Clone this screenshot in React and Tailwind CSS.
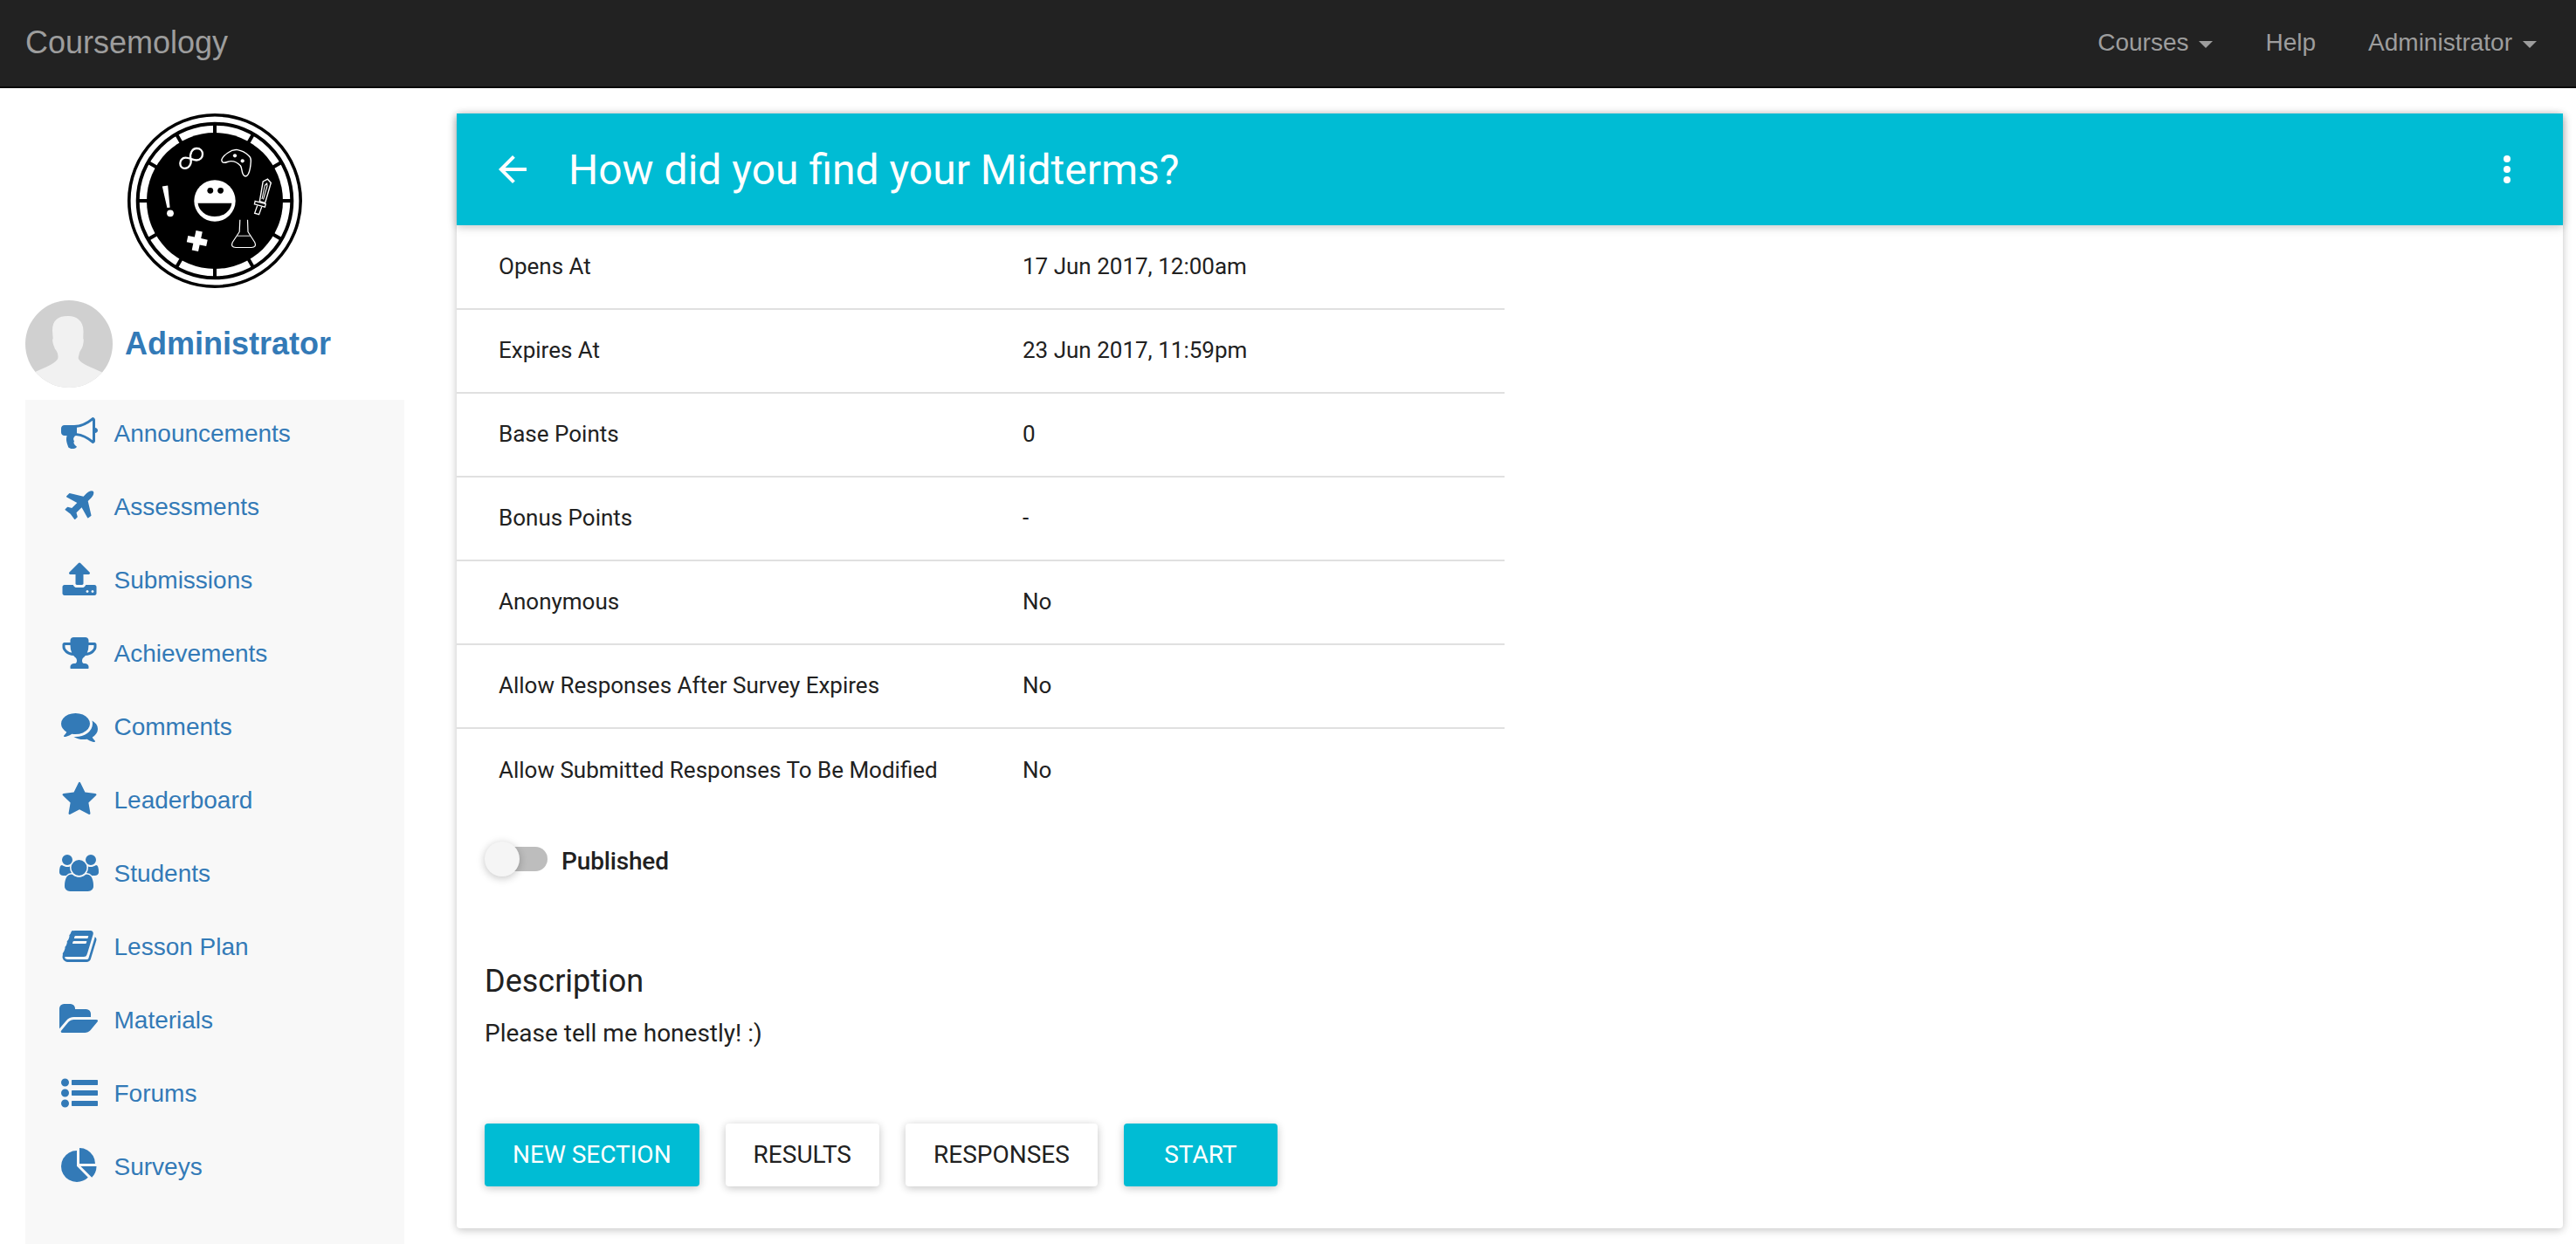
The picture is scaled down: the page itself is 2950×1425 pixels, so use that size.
const NAV = [
  { label: 'Announcements', d: 'M1664 640q53 0 90.5 37.5t37.5 90.5-37.5 90.5-90.5 37.5v384q0 52-38 90t-90 38q-417-347-812-380-58 19-91 66t-31 100.5 40 92.5q-20 33-23 65.5t6 58 33.5 55 48 50 61.5 50.5q-29 58-111.5 83t-168.5 11.5-132-55.5q-7-23-29.5-87.5t-32-94.5-23-89-15-101 3.5-98.5 22-110.5h-122q-66 0-113-47t-47-113v-192q0-66 47-113t113-47h480q435 0 896-384 52 0 90 38t38 90v384zm-128 604v-954q-394 302-768 343v270q377 42 768 341z' },
  { label: 'Assessments', d: 'M1568 160q44 52 12 148t-108 172l-161 161 160 696q5 19-12 33l-128 96q-7 6-19 6-4 0-7-1-15-3-21-16l-279-508-259 259 53 194q5 17-8 31l-96 96q-9 9-23 9h-2q-15-2-24-13l-189-252-252-189q-11-7-13-23-1-13 9-25l96-97q9-9 23-9 6 0 8 1l194 53 259-259-508-279q-14-8-17-24-2-16 9-27l128-128q14-13 30-8l665 159 160-160q76-76 172-108t148 12z' },
  { label: 'Submissions', d: 'M1344 1472q0-26-19-45t-45-19-45 19-19 45 19 45 45 19 45-19 19-45zm256 0q0-26-19-45t-45-19-45 19-19 45 19 45 45 19 45-19 19-45zm128-224v320q0 40-28 68t-68 28h-1472q-40 0-68-28t-28-68v-320q0-40 28-68t68-28h427q21 56 70.5 92t110.5 36h256q61 0 110.5-36t70.5-92h427q40 0 68 28t28 68zm-325-648q-17 40-59 40h-256v448q0 26-19 45t-45 19h-256q-26 0-45-19t-19-45v-448h-256q-42 0-59-40-17-39 14-69l448-448q18-19 45-19t45 19l448 448q31 30 14 69z' },
  { label: 'Achievements', d: 'M522 883q-74-162-74-371h-256v96q0 78 94.5 162t235.5 113zm1078-275v-96h-256q0 209-74 371 141-29 235.5-113t94.5-162zm128-128v128q0 71-41.5 143t-112 130-173 97.5-215.5 44.5q-42 54-95 95-38 34-52.5 72.5t-14.5 89.5q0 54 30.5 91t97.5 37q75 0 133.5 45.5t58.5 114.5v64q0 14-9 23t-23 9h-832q-14 0-23-9t-9-23v-64q0-69 58.5-114.5t133.5-45.5q67 0 97.5-37t30.5-91q0-51-14.5-89.5t-52.5-72.5q-53-41-95-95-113-5-215.5-44.5t-173-97.5-112-130-41.5-143v-128q0-40 28-68t68-28h288v-96q0-66 47-113t113-47h576q66 0 113 47t47 113v96h288q40 0 68 28t28 68z' },
  { label: 'Comments', d: 'M1408 768q0 139-94 257t-256.5 186.5-353.5 68.5q-86 0-176-16-124 88-278 128-36 9-86 16h-3q-11 0-20.5-8t-11.5-21q-1-3-1-6.5t.5-6.5 2-6l2.5-5 3.5-5.5 4-5 4.5-5 4-4.5q5-6 23-25t26-29.5 22.5-29 25-38.5 20.5-44q-124-72-195-177t-71-224q0-139 94-257t256.5-186.5 353.5-68.5 353.5 68.5 256.5 186.5 94 257zm384 256q0 120-71 224.5t-195 176.5q10 24 20.5 44t25 38.5 22.5 29 26 29.5 23 25q1 1 4 4.5t4.5 5 4 5 3.5 5.5l2.5 5 2 6 .5 6.5-1 6.5q-3 14-13 22t-22 7q-50-7-86-16-154-40-278-128-90 16-176 16-271 0-472-132 58 4 88 4 161 0 309-45t264-129q125-92 192-212t67-254q0-77-23-152 129 71 204 178t75 230z' },
  { label: 'Leaderboard', d: 'M1728 647q0 22-26 48l-363 354 86 500q1 7 1 20 0 21-10.5 35.5t-30.5 14.5q-19 0-40-12l-449-236-449 236q-22 12-40 12-21 0-31.5-14.5t-10.5-35.5q0-6 2-20l86-500-364-354q-25-27-25-48 0-37 56-46l502-73 225-455q19-41 49-41t49 41l225 455 502 73q56 9 56 46z' },
  { label: 'Students', wide: true, d: 'M593 896q-162 5-265 128h-134q-82 0-138-40.5t-56-118.5q0-353 124-353 6 0 43.5 21t97.5 42.5 119 21.5q67 0 133-23-5 37-5 66 0 139 81 256zm1071 637q0 120-73 189.5t-194 69.5h-874q-121 0-194-69.5t-73-189.5q0-53 3.5-103.5t14-109 26.5-108.5 43-97.5 62-81 85.5-53.5 111.5-20q10 0 43 21.5t73 48 107 48 135 21.5 135-21.5 107-48 73-48 43-21.5q61 0 111.5 20t85.5 53.5 62 81 43 97.5 26.5 108.5 14 109 3.5 103.5zm-1024-1277q0 106-75 181t-181 75-181-75-75-181 75-181 181-75 181 75 75 181zm704 384q0 159-112.5 271.5t-271.5 112.5-271.5-112.5-112.5-271.5 112.5-271.5 271.5-112.5 271.5 112.5 112.5 271.5zm576 225q0 78-56 118.5t-138 40.5h-134q-103-123-265-128 81-117 81-256 0-29-5-66 66 23 133 23 59 0 119-21.5t97.5-42.5 43.5-21q124 0 124 353zm-128-609q0 106-75 181t-181 75-181-75-75-181 75-181 181-75 181 75 75 181z' },
  { label: 'Lesson Plan', d: 'M1703 478q40 57 18 129l-275 906q-19 64-76.5 107.5t-122.5 43.5h-923q-77 0-148.5-53.5t-99.5-131.5q-24-67-2-127 0-4 3-27t4-37q1-8-3-21.5t-3-19.5q2-11 8-21t16.5-23.5 16.5-23.5q23-38 45-91.5t30-91.5q3-10 .5-30t-.5-28q3-11 17-28t17-23q21-36 42-92t25-90q1-9-2.5-32t.5-28q4-13 22-30.5t22-22.5q19-26 42.5-84.5t27.5-96.5q1-8-3-25.5t-2-26.5q2-8 9-18t18-23 17-21q8-12 16.5-30.5t15-35 16-36 19.5-32 26.5-23.5 36-11.5 47.5 5.5l-1 3q38-9 51-9h761q74 0 114 56t18 130l-274 906q-36 119-71.5 153.5t-128.5 34.5h-869q-27 0-38 15-11 16-1 43 24 70 144 70h923q29 0 56-15.5t35-41.5l300-987q7-22 5-57 38 15 59 43zm-1064 2q-4 13 2 22.5t20 9.5h608q13 0 25.5-9.5t16.5-22.5l21-64q4-13-2-22.5t-20-9.5h-608q-13 0-25.5 9.5t-16.5 22.5zm-83 256q-4 13 2 22.5t20 9.5h608q13 0 25.5-9.5t16.5-22.5l21-64q4-13-2-22.5t-20-9.5h-608q-13 0-25.5 9.5t-16.5 22.5z' },
  { label: 'Materials', wide: true, d: 'M1879 952q0 31-31 66l-336 396q-43 51-120.5 86.5t-143.5 35.5h-1088q-34 0-60.5-13t-26.5-43q0-31 31-66l336-396q43-51 120.5-86.5t143.5-35.5h1088q34 0 60.5 13t26.5 43zm-343-344v160h-832q-94 0-197 47.5t-164 119.5l-337 396-5 6q0-4-.5-12.5t-.5-12.5v-960q0-92 66-158t158-66h320q92 0 158 66t66 158v32h544q92 0 158 66t66 158z' },
  { label: 'Forums', d: 'M384 1408q0 80-56 136t-136 56-136-56-56-136 56-136 136-56 136 56 56 136zm0-512q0 80-56 136t-136 56-136-56-56-136 56-136 136-56 136 56 56 136zm1408 416v192q0 13-9.5 22.5t-22.5 9.5h-1216q-13 0-22.5-9.5t-9.5-22.5v-192q0-13 9.5-22.5t22.5-9.5h1216q13 0 22.5 9.5t9.5 22.5zm-1408-928q0 80-56 136t-136 56-136-56-56-136 56-136 136-56 136 56 56 136zm1408 416v192q0 13-9.5 22.5t-22.5 9.5h-1216q-13 0-22.5-9.5t-9.5-22.5v-192q0-13 9.5-22.5t22.5-9.5h1216q13 0 22.5 9.5t9.5 22.5zm0-512v192q0 13-9.5 22.5t-22.5 9.5h-1216q-13 0-22.5-9.5t-9.5-22.5v-192q0-13 9.5-22.5t22.5-9.5h1216q13 0 22.5 9.5t9.5 22.5z' },
  { label: 'Surveys', d: 'M768 890l546 546q-106 108-247.5 168t-298.5 60q-209 0-385.5-103t-279.5-279.5-103-385.5 103-385.5 279.5-279.5 385.5-103v762zm187 6h773q0 157-60 298.5t-168 247.5zm709-128h-768v-768q209 0 385.5 103t279.5 279.5 103 385.5z' },
];

const ROWS = [
  ['Opens At', '17 Jun 2017, 12:00am'],
  ['Expires At', '23 Jun 2017, 11:59pm'],
  ['Base Points', '0'],
  ['Bonus Points', '-'],
  ['Anonymous', 'No'],
  ['Allow Responses After Survey Expires', 'No'],
  ['Allow Submitted Responses To Be Modified', 'No'],
];

const SPOKES = [0, 30, 60, 90, 120, 150];

function Caret() {
  return (
    <svg className="ml-3 mt-[5px] h-2 w-4" viewBox="0 0 16 8" fill="currentColor">
      <path d="M0 0h16L8 8z" />
    </svg>
  );
}

function CourseLogo() {
  return (
    <svg className="h-[200px] w-[200px]" viewBox="0 0 200 200">
      <circle cx="100" cy="100" r="98.2" fill="#fff" stroke="#000" strokeWidth="3.6" />
      <circle cx="100" cy="100" r="88.3" fill="#fff" stroke="#000" strokeWidth="4" />
      {SPOKES.map((a) => (
        <path key={a} d="M100 12V188" stroke="#000" strokeWidth="4" transform={`rotate(${a} 100 100)`} />
      ))}
      <circle cx="100" cy="100" r="78" fill="#000" />
      <circle cx="100" cy="100" r="23.7" fill="#fff" />
      <circle cx="94.8" cy="88.3" r="3.4" />
      <circle cx="106.6" cy="88.3" r="3.4" />
      <path d="M80.6 102.8h38.8a19.5 17 0 0 1-38.8 0z" />
      <g fill="none" stroke="#fff" strokeLinejoin="round">
        <path d="M72.4 52C71 46 74 40 79.3 40C83.6 40 86 43 86 46.5C86 50.5 83 53.5 79 53.5C75 53.5 71 50.6 66.5 50.6C62.5 50.6 60.3 54 60.3 57C60.3 60.5 62.5 62.9 65.6 62.9C70.5 62.9 73.8 57.5 72.4 52z" strokeWidth="2.3" />
        <path d="M108 52.5C109 49.5 112 47 115 45C119 42 122 41 126 41.6C131 42.5 136 45.5 138.5 48C141 50 141.6 52 141.3 55C141 60 140.5 65 138.5 69C137.3 71.6 135.5 72.3 133.800 71.3C130.5 69.5 131.5 63 129.5 60C127 57 123 54.6 118.5 54.6C115.5 54.6 113.5 56.3 111 56.3C108.5 56.3 107.5 54.5 108 52.5z" strokeWidth="1.4" />
        <path d="M160.5 75.2L164.3 79.5L157.6 102.5L151.3 100.8L155.2 78z" strokeWidth="1.4" strokeLinejoin="miter" />
        <path d="M154 98L157.3 82.5L159.7 80L160 83L155.5 98.5" strokeWidth="1.1" />
        <path d="M146.2 100.3L158.3 103.7L157.4 107.2L145.4 103.8z" strokeWidth="1.3" strokeLinejoin="miter" />
        <path d="M148.7 105.5L145.6 114.2L150.6 115.7L153.7 107" strokeWidth="1.3" strokeLinejoin="miter" />
        <path d="M128.8 121.7L128.2 135.5L120.3 147.5Q117.8 153.2 124 153.5H142Q148.2 153.2 145.7 147.5L138 135.5L137.5 121.7" strokeWidth="1.2" />
        <path d="M125.5 140.2H140.7" strokeWidth="0.9" />
      </g>
      <g fill="#fff">
        <circle cx="123" cy="48.3" r="2.1" />
        <circle cx="131.7" cy="54.3" r="2.1" />
        <path d="M39.8 83.5L46.2 82.5L48.6 107.7L45.4 108.1z" />
        <circle cx="49" cy="114.3" r="3.9" />
        <path d="M76 134.5h7.5v7.7h7.7v7.5h-7.7v7.7H76v-7.7h-7.7v-7.5H76z" transform="rotate(12 79.7 146)" />
      </g>
    </svg>
  );
}

function Avatar() {
  return (
    <svg className="h-[100px] w-[100px] rounded-full" viewBox="0 0 100 100">
      <rect width="100" height="100" fill="#d0d0d0" />
      <path
        d="M48.7 18C58 17.7 66.5 23 66.5 35L66.3 44C67.2 44 66.7 50 65.5 53C64.5 56 63 57 62 60C61 65 60 66 61.5 68C64 73 76 77 88 82.5V100H10V82.5C23 77 33 73 36.5 68C38 66 37.5 64 37 61C36 57 34 57 33 53C31.5 50 30.5 44 31.7 44L31 35C31 22 38 18 48.7 18z"
        fill="#f1f1f1"
      />
    </svg>
  );
}

function Button({ primary, wide, children }) {
  return (
    <button
      className={
        'h-[72px] rounded-[4px] text-[28px] leading-[72px] shadow-[0_2px_12px_rgba(0,0,0,0.12),0_2px_8px_rgba(0,0,0,0.12)] ' +
        (primary ? 'bg-[#00bcd4] text-white ' : 'bg-white text-[#212121] ') +
        (wide ? 'w-[176px]' : 'px-8')
      }
    >
      {children}
    </button>
  );
}

export default function App() {
  return (
    <div className="flex h-[1425px] w-[2950px] flex-col overflow-hidden bg-white font-['Liberation_Sans',Arial,sans-serif] text-[28px]">
      <header className="flex h-[101px] shrink-0 items-center justify-between border-b-2 border-[#080808] bg-[#222] pr-[45px] pb-0.5 pl-[29px] text-[#9d9d9d]">
        <span className="text-[36px] leading-10">Coursemology</span>
        <nav className="flex items-center gap-[60px] leading-10">
          <span className="flex items-center">Courses<Caret /></span>
          <span>Help</span>
          <span className="flex items-center">Administrator<Caret /></span>
        </nav>
      </header>

      <div className="flex min-h-0 flex-1">
        <aside className="ml-[29px] flex w-[434px] shrink-0 flex-col pt-[29px]">
          <div className="flex justify-center"><CourseLogo /></div>
          <div className="mt-3.5 flex items-center text-[#337ab7]">
            <Avatar />
            <span className="ml-3.5 text-[36px] leading-10 font-bold">Administrator</span>
          </div>
          <ul className="mt-3.5 min-h-0 flex-1 bg-[#f8f8f8] text-[#337ab7]">
            {NAV.map((item) => (
              <li key={item.label} className="flex h-[84px] items-start pl-[34px]">
                <span className="mt-[17px] flex w-[55px] justify-center">
                  <svg
                    className={item.wide ? 'h-[42px] w-[45px]' : 'h-[42px] w-[42px]'}
                    viewBox={item.wide ? '0 0 1920 1792' : '0 0 1792 1792'}
                    fill="currentColor"
                  >
                    <path d={item.d} />
                  </svg>
                </span>
                <span className="mt-[19px] ml-[12.5px] leading-10">{item.label}</span>
              </li>
            ))}
          </ul>
        </aside>

        <main className="mt-[29px] ml-[60px] h-[1277px] w-[2412px] rounded-[4px] bg-white font-[Roboto,sans-serif] text-[#212121] shadow-[0_2px_12px_rgba(0,0,0,0.12),0_2px_8px_rgba(0,0,0,0.12)]">
          <div className="flex h-32 items-center bg-[#00bcd4] pr-10 pl-10 text-white shadow-[0_2px_12px_rgba(0,0,0,0.12),0_2px_8px_rgba(0,0,0,0.12)]">
            <svg className="h-12 w-12" viewBox="0 0 24 24" fill="currentColor">
              <path d="M20 11H7.83l5.59-5.59L12 4l-8 8 8 8 1.41-1.41L7.83 13H20v-2z" />
            </svg>
            <h1 className="ml-10 flex-1 pt-0.5 text-[48px] leading-[64px]">How did you find your Midterms?</h1>
            <svg className="h-12 w-12" viewBox="0 0 24 24" fill="currentColor">
              <circle cx="12" cy="6" r="2" />
              <circle cx="12" cy="12" r="2" />
              <circle cx="12" cy="18" r="2" />
            </svg>
          </div>

          <div className="w-[1200px] text-[26px]">
            {ROWS.map(([name, value], i) => (
              <div
                key={name}
                className={
                  'grid h-24 grid-cols-2 items-center pb-0.5 first:h-[97px] first:pb-0 ' +
                  (i < ROWS.length - 1 ? 'border-b-2 border-[#e0e0e0]' : '')
                }
              >
                <div className="pl-12">{name}</div>
                <div className="pl-12">{value}</div>
              </div>
            ))}
          </div>

          <div className="px-8">
            <div className="mt-[33px] flex items-start">
              <div className="relative h-10 w-[72px]">
                <div className="mt-1.5 ml-1 h-7 w-[68px] rounded-full bg-[#bdbdbd]" />
                <div className="absolute top-0 left-0 h-10 w-10 rounded-full bg-[#f5f5f5] shadow-[0_2px_12px_rgba(0,0,0,0.12),0_2px_8px_rgba(0,0,0,0.12)]" />
              </div>
              <span className="ml-4 text-[28px] leading-[46px] font-medium tracking-[-0.15px]">Published</span>
            </div>
            <h2 className="mt-[94px] text-[36px] leading-10">Description</h2>
            <p className="mt-5 text-[28px] leading-10">Please tell me honestly! :)</p>
            <div className="mt-[83px] flex gap-[30px]">
              <Button primary>NEW SECTION</Button>
              <Button>RESULTS</Button>
              <Button>RESPONSES</Button>
              <Button primary wide>START</Button>
            </div>
          </div>
        </main>
      </div>
    </div>
  );
}
